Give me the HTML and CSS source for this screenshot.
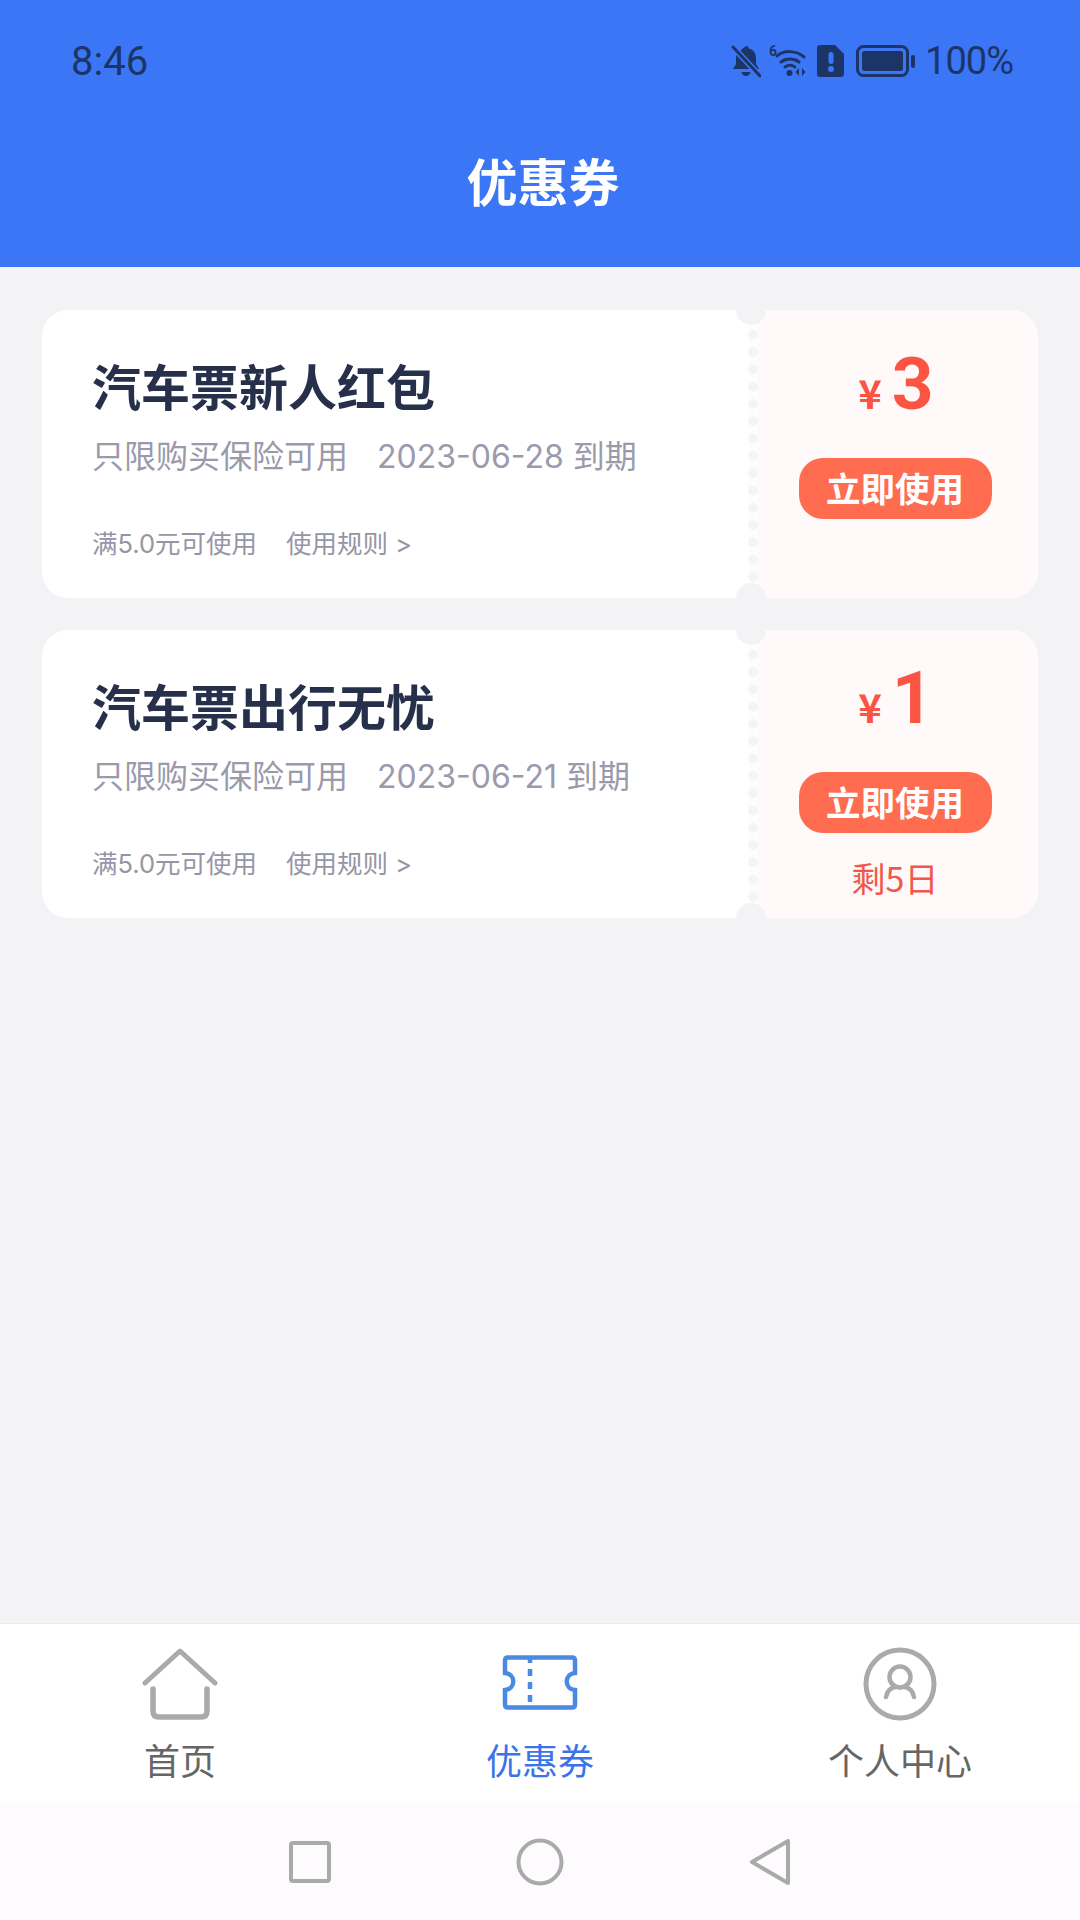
FILE: index.html
```html
<!DOCTYPE html>
<html>
  <head>
    <meta charset="utf-8">
    <link rel="stylesheet" href="styles.css">
  </head>
  <body>
    <div class="page">
      <header class="header">
        <div class="status-bar">
          <span class="status-time">8:46</span>
          <div class="status-icons">
            <svg class="icon-bell" width="30" height="34" viewBox="0 0 30 34">
              <path d="M15 2c1.600 0 2.600 1 2.800 2.400C22.600 5.600 25 9.500 25 14v6l3 5H2l3-5v-6c0-1.800.4-3.500 1.200-5z" fill="#1c3566"/>
              <path d="M10.500 28h9c-.5 2.500-2.300 4-4.500 4s-4-1.500-4.500-4z" fill="#1c3566"/>
              <path d="M2 3l27 29" stroke="#3b76f6" stroke-width="6"/>
              <path d="M2 3l27 29" stroke="#1c3566" stroke-width="3" stroke-linecap="round"/>
            </svg>
            <svg class="icon-wifi" width="40" height="34" viewBox="0 0 40 34">
              <text class="wifi-six" x="0" y="12">6</text>
              <path d="M8 12c7-6 19-6 27 1" stroke="#1c3566" stroke-width="3" fill="none" stroke-linecap="round"/>
              <path d="M12 18c5-4 13-4 18 0" stroke="#1c3566" stroke-width="3" fill="none" stroke-linecap="round"/>
              <path d="M16 23c3-2 7-2 10 0" stroke="#1c3566" stroke-width="3" fill="none" stroke-linecap="round"/>
              <circle cx="20.500" cy="29" r="3" fill="#1c3566"/>
              <path d="M30 32v-8l-3.500 4zM33 24v8l3.500-4z" fill="#1c3566"/>
            </svg>
            <svg class="icon-sim" width="28" height="34" viewBox="0 0 28 34">
              <path d="M3 1h15l9 9v20c0 2-1 3-3 3H3c-2 0-3-1-3-3V4c0-2 1-3 3-3z" fill="#1c3566"/>
              <rect x="11.500" y="8" width="5" height="12" rx="2.500" fill="#3b76f6"/>
              <circle cx="14" cy="25" r="3" fill="#3b76f6"/>
            </svg>
            <svg class="icon-battery" width="60" height="34" viewBox="0 0 60 34">
              <rect x="1.500" y="2.500" width="50" height="29" rx="6" fill="none" stroke="#1c3566" stroke-width="3"/>
              <rect x="6" y="7" width="41" height="20" rx="2.500" fill="#1c3566"/>
              <rect x="55" y="11" width="4" height="13" rx="2" fill="#1c3566"/>
            </svg>
            <span class="status-battery">100%</span>
          </div>
        </div>
        <h1 class="header-title">优惠券</h1>
      </header>

      <main class="coupon-list">
        <div class="coupon">
          <div class="coupon-info">
            <div class="coupon-title">汽车票新人红包</div>
            <div class="coupon-sub">
              <span>只限购买保险可用</span>
              <span>2023-06-28 到期</span>
            </div>
            <div class="coupon-rule">
              <span>满5.0元可使用</span>
              <span>使用规则 &gt;</span>
            </div>
          </div>
          <div class="coupon-perf"></div>
          <div class="coupon-side">
            <div class="price"><span class="price-unit">¥</span><span class="price-num">3</span></div>
            <div class="use-btn">立即使用</div>
          </div>
        </div>

        <div class="coupon">
          <div class="coupon-info">
            <div class="coupon-title">汽车票出行无忧</div>
            <div class="coupon-sub">
              <span>只限购买保险可用</span>
              <span>2023-06-21 到期</span>
            </div>
            <div class="coupon-rule">
              <span>满5.0元可使用</span>
              <span>使用规则 &gt;</span>
            </div>
          </div>
          <div class="coupon-perf"></div>
          <div class="coupon-side has-days">
            <div class="price"><span class="price-unit">¥</span><span class="price-num">1</span></div>
            <div class="use-btn">立即使用</div>
            <div class="days-left">剩5日</div>
          </div>
        </div>
      </main>

      <nav class="tab-bar">
        <div class="tab">
          <svg class="tab-icon" width="76" height="76" viewBox="0 0 76 76">
            <path d="M3 37L38 5l35 32" fill="none" stroke="#aaa" stroke-width="5" stroke-linecap="round" stroke-linejoin="round"/>
            <path d="M11 43v22c0 4 2 6 6 6h42c4 0 6-2 6-6V43" fill="none" stroke="#aaa" stroke-width="5.500" stroke-linecap="round"/>
          </svg>
          <span class="tab-label">首页</span>
        </div>
        <div class="tab active">
          <svg class="tab-icon" width="76" height="76" viewBox="0 0 76 76">
            <path d="M6 11.500h64q3 0 3 3V27c-11 1-11 16 0 17v14.500q0 3-3 3H6q-3 0-3-3V44c11-1 11-16 0-17V14.500q0-3 3-3z" fill="none" stroke="#4a8ae0" stroke-width="4.500"/>
            <path d="M28 10v51" stroke="#4a8ae0" stroke-width="4.500" stroke-dasharray="7 6"/>
          </svg>
          <span class="tab-label">优惠券</span>
        </div>
        <div class="tab">
          <svg class="tab-icon" width="76" height="76" viewBox="0 0 76 76">
            <circle cx="38" cy="38" r="34" fill="none" stroke="#aaa" stroke-width="5"/>
            <circle cx="38" cy="31" r="10.500" fill="none" stroke="#aaa" stroke-width="4.500"/>
            <path d="M24 51c1-6 5-9 9-10M52 51c-1-6-5-9-9-10" fill="none" stroke="#aaa" stroke-width="4.500" stroke-linecap="round"/>
          </svg>
          <span class="tab-label">个人中心</span>
        </div>
      </nav>

      <div class="nav-bar">
        <svg width="42" height="42" viewBox="0 0 42 42">
          <rect x="2" y="2" width="38" height="38" rx="2" fill="none" stroke="#aaa" stroke-width="4"/>
        </svg>
        <svg width="48" height="48" viewBox="0 0 48 48">
          <circle cx="24" cy="24" r="21.500" fill="none" stroke="#aaa" stroke-width="4"/>
        </svg>
        <svg width="42" height="48" viewBox="0 0 42 48">
          <path d="M39 3v42L3 24z" fill="none" stroke="#aaa" stroke-width="4" stroke-linejoin="round"/>
        </svg>
      </div>
    </div>
  </body>
</html>
```

FILE: styles.css
```css
* {
  box-sizing: border-box;
}
body {
  margin: 0;
  font-family: "Noto Sans CJK SC", "Noto Sans", sans-serif;
  background-color: #f3f2f5;
}
.page {
  width: 1080px;
  height: 1920px;
  display: flex;
  flex-direction: column;
}

/* 顶部 */
.header {
  height: 267px;
  background-color: #3b76f6;
  padding-top: 39px;
}
.status-bar {
  height: 44px;
  display: flex;
  justify-content: space-between;
  align-items: center;
  padding: 0 67px 0 71px;
  color: #1c3566;
}
.status-time {
  font-family: Roboto, sans-serif;
  font-size: 40px;
}
.status-icons {
  display: flex;
  align-items: center;
  gap: 8px;
}
.icon-sim {
  margin-right: 3px;
}
.status-battery {
  font-family: Roboto, sans-serif;
  font-size: 38px;
  letter-spacing: -1px;
  margin-left: 1px;
}
.wifi-six {
  font-family: Roboto, sans-serif;
  font-size: 14px;
  font-weight: 700;
  fill: #1c3566;
}
.header-title {
  margin: 67px 0 0;
  padding-left: 6px;
  text-align: center;
  color: #fff;
  font-size: 51px;
  font-weight: 700;
  line-height: 60px;
}

/* 优惠券列表 */
.coupon-list {
  flex: 1;
  display: flex;
  flex-direction: column;
  gap: 32px;
  padding: 43px 42px 0;
}
.coupon {
  height: 288px;
  display: flex;
  position: relative;
  flex: none;
}
.coupon::before,
.coupon::after {
  content: "";
  position: absolute;
  left: 694px;
  width: 30px;
  height: 30px;
  border-radius: 50%;
  background-color: #f3f2f5;
}
.coupon::before {
  top: -15px;
}
.coupon::after {
  bottom: -15px;
}
.coupon-info {
  width: 706px;
  background-color: #fff;
  border-radius: 26px 0 0 26px;
  padding: 43px 0 0 50px;
}
.coupon-title {
  font-size: 49px;
  font-weight: 700;
  line-height: 64px;
  color: #26304a;
}
.coupon-sub {
  display: flex;
  gap: 29px;
  margin-top: 18px;
  font-family: Inter, "Noto Sans CJK SC", sans-serif;
  font-size: 32px;
  line-height: 44px;
  color: #9a9aab;
}
.coupon-rule {
  display: flex;
  gap: 29px;
  margin-top: 47px;
  font-family: Inter, "Noto Sans CJK SC", sans-serif;
  font-size: 25.5px;
  line-height: 36px;
  color: #9595a5;
}
.coupon-perf {
  width: 10px;
  background-color: #fffcfc;
  background-image: radial-gradient(circle at 5px 50%, #f4f3f6 4.5px, transparent 5px);
  background-size: 10px 17.3px;
  background-position: 0 16px;
}
.coupon-side {
  flex: 1;
  background-color: #fff9f9;
  border-radius: 0 26px 26px 0;
  display: flex;
  flex-direction: column;
  align-items: center;
  padding: 29px 6px 0 0;
}
.coupon-side.has-days {
  padding-top: 23px;
}
.price {
  display: flex;
  align-items: baseline;
  gap: 10px;
  height: 90px;
  color: #fc5443;
  margin-left: 2px;
}
.price-unit {
  font-size: 40px;
  font-weight: 700;
  line-height: 90px;
}
.price-num {
  font-family: Roboto, sans-serif;
  font-size: 73px;
  font-weight: 700;
  line-height: 90px;
}
.use-btn {
  width: 193px;
  height: 61px;
  margin-top: 29px;
  border-radius: 24px;
  background-color: #ff6c50;
  color: #fff;
  font-size: 34.5px;
  font-weight: 700;
  line-height: 59px;
  text-align: center;
}
.days-left {
  margin-top: 23px;
  font-size: 34px;
  line-height: 44px;
  color: #f0584a;
}

/* 底部导航 */
.tab-bar {
  height: 180px;
  background-color: #fff;
  border-top: 1px solid #ebebee;
  display: grid;
  grid-template-columns: 1fr 1fr 1fr;
  padding-top: 22px;
}
.tab {
  display: flex;
  flex-direction: column;
  align-items: center;
  color: #666;
}
.tab.active {
  color: #3b74e8;
}
.tab-icon {
  display: block;
}
.tab-label {
  margin-top: 12px;
  font-size: 36px;
  line-height: 50px;
}
.nav-bar {
  height: 117px;
  background-color: #fdfbfe;
  display: flex;
  justify-content: center;
  align-items: center;
  gap: 185px;
}
```
